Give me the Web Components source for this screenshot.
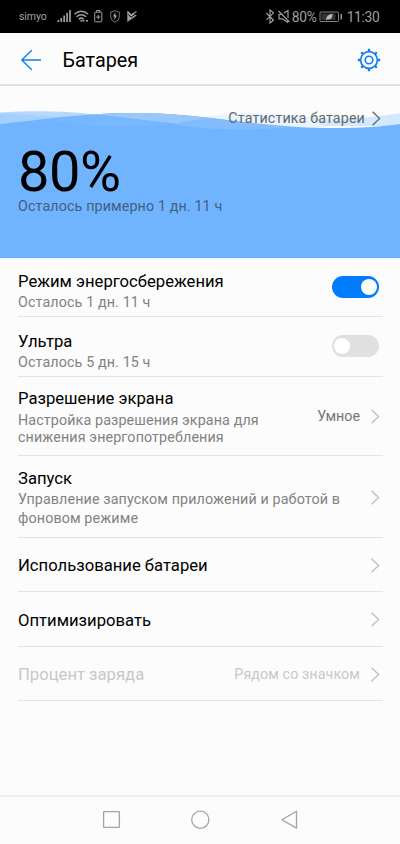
<!DOCTYPE html>
<html lang="ru">
<head>
<meta charset="utf-8">
<title>Батарея</title>
<style>
html,body{margin:0;height:100%;background:#fcfcfc}
body{font-family:Roboto,"Noto Sans",sans-serif;color:#000}
</style>
</head>
<body>
<battery-screen></battery-screen>
<script>
function define(name, html) {
  const t = document.createElement('template');
  t.innerHTML = html;
  customElements.define(name, class extends HTMLElement {
    constructor() {
      super();
      this.attachShadow({mode: 'open'}).appendChild(t.content.cloneNode(true));
    }
  });
}

define('status-bar', `
<style>
:host{display:flex;height:33px;background:#000;color:#a0a0a0;align-items:center;justify-content:space-between;box-sizing:border-box;padding:0 20.500px 0 19px}
div{display:flex;align-items:center;height:33px}
svg{display:block;flex:none}
span{white-space:nowrap;line-height:16px}
.c{font-size:10.500px;letter-spacing:-.1px;width:37px}
.p{font-size:13.800px;width:24.500px;letter-spacing:-.25px}
.t{font-size:13.800px;letter-spacing:-.3px}
</style>
<div>
<span class="c">simyo</span>
<svg width="84" height="33" viewBox="56 0 84 33" fill="none" stroke="#a0a0a0">
<path d="M58.300 22v-2M61.300 22v-4M64.200 22v-6.500M67.100 22v-9M70 22v-12" stroke-width="1.700"/>
<path d="M74.500 14.200q6.800-6 13.600 0M76.500 16.800q4.800-4.200 9.600 0M78.700 19.200q2.500-2.200 5 0" stroke-width="1.500"/>
<path d="M79.500 20.300h3.500l-1.700 1.800z" fill="#a0a0a0" stroke="none"/>
<path d="M82.500 20.800h2M86 20.800h2" stroke-width="1.600"/>
<path d="M96.500 12v-1.500h3.500V12M95.500 12.200h5.500q.8 0 .8.800v8q0 .8-.8.800h-5.500q-.8 0-.8-.8v-8q0-.8.800-.8zM98.250 14.800v4.400M96.200 17h4.100" stroke-width="1"/>
<path d="M115 10.500q2 1.500 4.300 1.500v5q0 3.300-4.300 5.300q-4.300-2-4.300-5.300v-5q2.300 0 4.300-1.500z" stroke-width="1" stroke="#757575"/>
<path d="M115.500 12l-2.600 4.500h1.700l-.4 3.700 2.800-4.700h-1.700z" fill="#a8a8a8" stroke="none"/>
<path d="M127.300 10.800l1.900 1.100 1.900 2.300 2-.900 3.700 2.200-9.500 6.500z" fill="#a0a0a0" stroke="none"/>
<path d="M128.300 14.500l2.800 2.700 6.500-4.700" stroke="#000" stroke-width="1"/>
<path d="M131 15.200l5.500-3.700" stroke="#a0a0a0" stroke-width="1.200"/>
</svg>
</div>
<div>
<svg width="27" height="33" viewBox="265 0 27 33" fill="none" stroke="#a0a0a0" stroke-width="1.150">
<path d="M266.500 13l7 7.300-3.500 2.700V10l3.500 2.900-7 7"/>
<path d="M278.500 11l11 11M281.500 14.500H279v4.300h3.200l5.300 3.300v-2.500M283.500 13.300l4.500-2.800v7.500"/>
</svg>
<span class="p">80%</span>
<svg width="30.500" height="33" viewBox="316.500 0 30.500 33">
<rect x="320.500" y="12" width="18.500" height="9.500" rx="1" fill="none" stroke="#858585"/>
<rect x="322" y="13.500" width="14" height="6.500" fill="#333"/>
<path d="M326.500 20.500q0-6 6.500-6.700q.4 6.400-5.200 5.600z" fill="#b8b8b8"/>
<path d="M341.700 14v5.500" stroke="#a0a0a0" stroke-width="1.400"/>
</svg>
<span class="t">11:30</span>
</div>`);

define('title-bar', `
<style>
:host{display:flex;height:53px;box-sizing:border-box;border-bottom:2px solid #e1e1e1;align-items:center;padding:3px 19px 0 20px}
svg{display:block;flex:none}
h1{margin:0 0 0 20.500px;flex:1;font-size:19.800px;line-height:24px;font-weight:400;position:relative;top:.5px}
</style>
<svg width="22" height="22" viewBox="20 48.500 22 22" fill="none" stroke="#0e7ef4" stroke-width="1.400"><path d="M41 59.500H21.800M31.800 49.800L21.800 59.500l10 9.800"/></svg>
<h1><slot></slot></h1>
<svg width="24" height="24" viewBox="-12 -12 24 24" fill="none" stroke="#0e7ef4" stroke-width="1.600">
<circle r="8.400"/><circle r="3.800"/>
<g stroke-width="2.300"><path d="M0-8.500V-11.200M0 8.500V11.200M-8.500 0H-11.200M8.500 0H11.200M6-6L7.800-7.800M6 6L7.800 7.800M-6 6L-7.800 7.800M-6-6L-7.800-7.800"/></g>
</svg>`);

define('chevron-icon', `
<style>:host{display:block;flex:none;width:9px;height:15px;color:#bdbdbd}svg{display:block}</style>
<svg width="9" height="15" viewBox="0 0 9 15" fill="none" stroke="currentColor" stroke-width="1.300"><path d="M.6.700L7.600 7.500.600 14.300"/></svg>`);

define('battery-hero', `
<style>
:host{display:block;position:relative;height:172px}
.w{position:absolute;inset:0;display:block}
.c{position:relative;display:flex;flex-direction:column;padding:22px 19.500px 0 18px}
.l{align-self:flex-end;display:flex;align-items:center;gap:6.500px;height:20px;font-size:14.300px;letter-spacing:.12px;color:#62686e}
chevron-icon{color:#62686e}
.n{font-size:56px;line-height:46px;margin-top:20.500px;letter-spacing:-.5px}
.s{font-size:14.300px;line-height:17px;margin-top:3px;color:#44607e;letter-spacing:.12px}
</style>
<svg class="w" width="400" height="172" viewBox="0 86 400 172">
<path d="M0 112.500C35 110.500 65 111 95 114.500C60 119 35 122 0 124z" fill="#b5d9fd"/>
<path d="M0 113C30 115 50 117 68 117.500C45 120 25 122 0 124z" fill="#a6d0fc"/>
<path d="M208 117C225 113 265 112 310 117.500C345 122 375 116 400 113.500V126H290z" fill="#d3e8fd"/>
<path d="M208 117C225 113 265 112 310 117.500L325 127H290z" fill="#eaf4fe"/>
<path d="M0 124C50 119 80 113.500 133 113C205 113 255 127 325 128C355 128.500 378 127 400 124V258H0z" fill="#70b3ff"/>
<path d="M95 114.500C107 113.300 120 113 133 113C195 113 240 124 292 127C265 129.500 240 130 215 129C175 126 135 119 95 114.500z" fill="#83bcfd"/>
<path d="M95 114.500C107 113.300 120 113 133 113C160 113 185 115 208 118.500C196 119 185 121 177 123.500C150 121 120 117 95 114.500z" fill="#98c8fb"/>
<path d="M52 120C95 129 140 128 177 123.500C150 121 120 117 95 114.500C80 116 65 118 52 120z" fill="#77b7fe"/>
</svg>
<div class="c">
<div class="l"><span>Статистика батареи</span><chevron-icon></chevron-icon></div>
<div class="n">80%</div>
<div class="s">Осталось примерно 1 дн. 11 ч</div>
</div>`);

define('toggle-switch', `
<style>
:host{display:flex;flex:none;box-sizing:border-box;width:47px;height:22px;border-radius:11px;background:#e0e0e0;padding:3px 2px;justify-content:flex-start;margin-right:3.500px}
:host([on]){background:#007dff;justify-content:flex-end}
i{width:16px;height:16px;border-radius:50%;background:#fff}
</style><i></i>`);

define('setting-row', `
<style>
:host{display:flex;box-sizing:border-box;height:var(--h);margin:0 17.500px 0 18px;border-bottom:1px solid #e3e3e3}
.m{flex:1;padding-top:var(--pt)}
.t{font-size:16.650px;line-height:20px;white-space:nowrap}
.s{font-size:14.300px;line-height:var(--lh,20px);margin-top:var(--g,0);color:#828282;white-space:nowrap;letter-spacing:.12px}
.e{display:flex;align-items:center;height:22px;margin-top:var(--et);gap:11px;font-size:14.300px;color:#767676}
::slotted(chevron-icon){margin-right:2.500px}
:host([disabled]) .t,:host([disabled]) .e{color:#c8c8c8}
:host([disabled]) .e{letter-spacing:.08px}
</style>
<div class="m"><div class="t"><slot></slot></div><div class="s"><slot name="sub"></slot></div></div>
<div class="e"><slot name="end"></slot></div>`);

define('nav-bar', `
<style>:host{display:block;box-sizing:border-box;height:49px;border-top:2px solid #ececec}svg{display:block}</style>
<svg width="400" height="47" viewBox="0 797 400 47" fill="none" stroke="#a3a3a3" stroke-width="1.300" stroke-linejoin="round">
<rect x="103.600" y="811.600" width="15.800" height="15.800" rx=".6"/><circle cx="200.300" cy="819.700" r="8.600"/><path d="M296.500 811.300v16.800L281.800 819.700z"/></svg>`);

define('battery-screen', `
<style>
:host{display:flex;flex-direction:column;width:400px;height:844px;background:#fcfcfc;overflow:hidden}
main{flex:1}
</style>
<status-bar></status-bar>
<title-bar>Батарея</title-bar>
<main>
<battery-hero></battery-hero>
<setting-row style="--h:59px;--pt:14px;--et:18px">Режим энергосбережения<span slot="sub">Осталось 1 дн. 11 ч</span><toggle-switch slot="end" on></toggle-switch></setting-row>
<setting-row style="--h:60px;--pt:15px;--et:18px">Ультра<span slot="sub">Осталось 5 дн. 15 ч</span><toggle-switch slot="end"></toggle-switch></setting-row>
<setting-row style="--h:79px;--pt:12px;--et:28px;--lh:17px;--g:3px">Разрешение экрана<span slot="sub">Настройка разрешения экрана для<br>снижения энергопотребления</span><span slot="end">Умное</span><chevron-icon slot="end"></chevron-icon></setting-row>
<setting-row style="--h:82px;--pt:13px;--et:30px;--lh:19px;--g:1px">Запуск<span slot="sub">Управление запуском приложений и работой в<br>фоновом режиме</span><chevron-icon slot="end"></chevron-icon></setting-row>
<setting-row style="--h:54px;--pt:18px;--et:16px">Использование батареи<chevron-icon slot="end"></chevron-icon></setting-row>
<setting-row style="--h:55px;--pt:19px;--et:16px">Оптимизировать<chevron-icon slot="end"></chevron-icon></setting-row>
<setting-row disabled style="--h:54px;--pt:18px;--et:16px">Процент заряда<span slot="end">Рядом со значком</span><chevron-icon slot="end"></chevron-icon></setting-row>
</main>
<nav-bar></nav-bar>`);
</script>
</body>
</html>
